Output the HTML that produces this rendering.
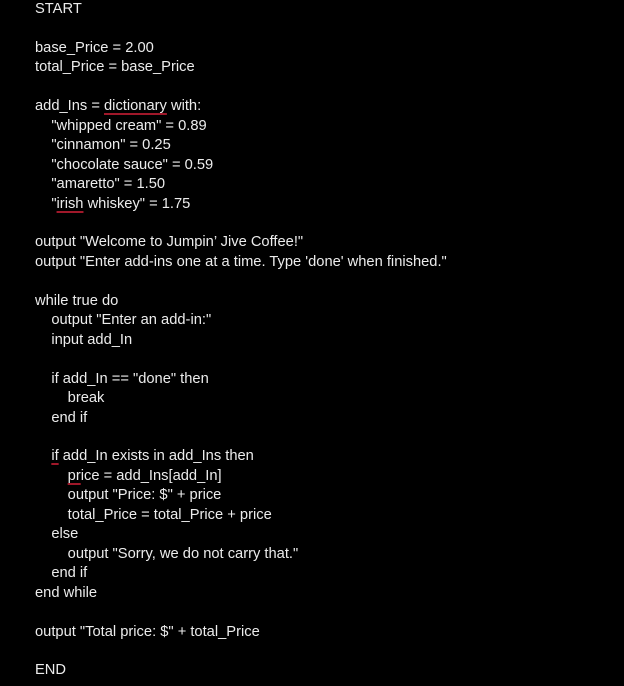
<!DOCTYPE html>
<html><head><meta charset="utf-8"><style>
html,body{margin:0;padding:0;background:#000;width:624px;height:686px;overflow:hidden}
.c{position:absolute;left:35px;top:0px;font-family:"Liberation Sans",Arial,sans-serif;font-size:14.7px;line-height:19.45px;color:#ececec;white-space:pre}
.u{text-decoration:underline;text-decoration-color:#a0182a;text-decoration-thickness:2px;text-underline-offset:3px}
</style></head><body>
<div class="c">START

base_Price = 2.00
total_Price = base_Price

add_Ins = <span class="u">dictionary</span> with:
    "whipped cream" = 0.89
    "cinnamon" = 0.25
    "chocolate sauce" = 0.59
    "amaretto" = 1.50
    "<span class="u">irish</span> whiskey" = 1.75

output "Welcome to Jumpin’ Jive Coffee!"
output "Enter add-ins one at a time. Type 'done' when finished."

while true do
    output "Enter an add-in:"
    input add_In

    if add_In == "done" then
        break
    end if

    <span class="u">if</span> add_In exists in add_Ins then
        <span class="u">pr</span>ice = add_Ins[add_In]
        output "Price: $" + price
        total_Price = total_Price + price
    else
        output "Sorry, we do not carry that."
    end if
end while

output "Total price: $" + total_Price

END</div>
</body></html>
